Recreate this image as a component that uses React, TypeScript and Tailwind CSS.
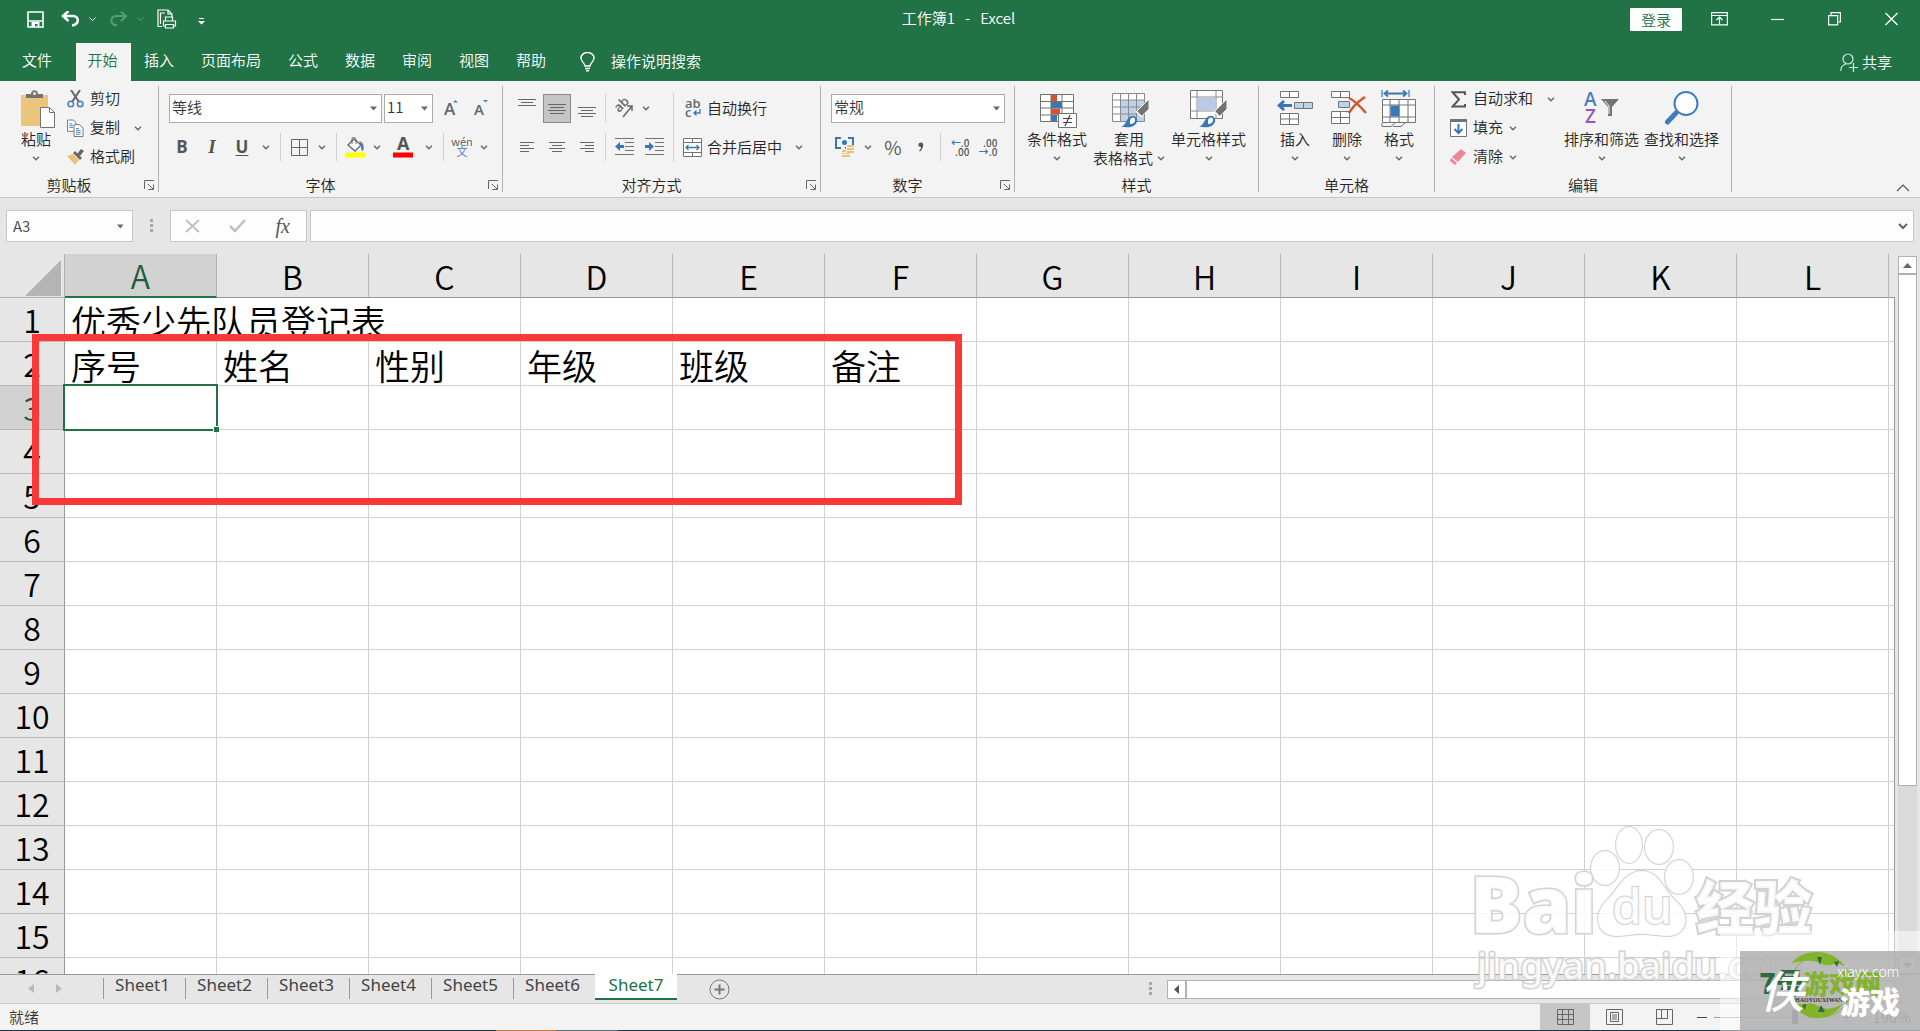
import React from "react";

type Children = { children?: React.ReactNode };

const COLUMNS = ["A", "B", "C", "D", "E", "F", "G", "H", "I", "J", "K", "L"];
const ROWS = Array.from({ length: 16 }, (_, i) => i + 1);
const HEADINGS = ["序号", "姓名", "性别", "年级", "班级", "备注"];
const MENUS = ["插入", "页面布局", "公式", "数据", "审阅", "视图", "帮助"];
const SHEETS = ["Sheet1", "Sheet2", "Sheet3", "Sheet4", "Sheet5", "Sheet6"];

/* ---------- small parts ---------- */

const Caret = () => (
  <svg width="8" height="5" viewBox="0 0 8 5" fill="none" stroke="#666" strokeWidth="1.4">
    <path d="M1 .8l3 3 3-3" />
  </svg>
);

const CaretButton = ({ label }: { label: string }) => (
  <button aria-label={label} className="flex h-7 w-[18px] items-center justify-center">
    <Caret />
  </button>
);

const Sep = () => <span className="mx-[5px] h-7 w-px bg-[#d0d0d0]" />;

const Launcher = ({ label }: { label: string }) => (
  <button aria-label={label} className="w-5 pl-[6px]">
    <svg width="11" height="11" viewBox="0 0 11 11" fill="none" stroke="#666">
      <path d="M.5 9V.5H10M4 4l5 5M9.500 4.500v5h-5" />
    </svg>
  </button>
);

const Group = ({ label, launcher, className, children }: Children & { label: string; launcher?: boolean; className: string }) => (
  <section className={`flex h-[106px] shrink-0 flex-col border-r border-[#b1b1b1] ${className}`}>
    <div className="flex h-[92px]">{children}</div>
    <div className="flex h-[14px] items-center text-center leading-[14px]">
      <span className="flex-1">{label}</span>
      {launcher && <Launcher label={`${label}设置`} />}
    </div>
  </section>
);

const BigButton = ({ icon, label, second, className }: { icon: React.ReactNode; label: string; second?: string; className: string }) => (
  <button className={`flex shrink-0 flex-col items-center pt-1 leading-[18px] whitespace-nowrap ${className}`}>
    <span className="flex h-10 items-start">{icon}</span>
    <span>{label}</span>
    <span className="flex h-5 items-center gap-1">
      {second}
      <Caret />
    </span>
  </button>
);

const SmallButton = ({ icon, label, caret }: { icon: React.ReactNode; label: string; caret?: string }) => (
  <button className="flex h-6 items-center whitespace-nowrap">
    <span className="mr-[6px] flex w-[17px] justify-center">{icon}</span>
    <span className="pb-[2px]">{label}</span>
    {caret && (
      <span className={caret}>
        <Caret />
      </span>
    )}
  </button>
);

const Combo = ({ label, value, className }: { label: string; value: string; className: string }) => (
  <label className={`relative block h-[29px] ${className}`}>
    <select aria-label={label} className="h-full w-full appearance-none border border-[#ababab] bg-white pb-[2px] pl-[2px] text-[15px] text-[#333]">
      <option>{value}</option>
    </select>
    <svg className="pointer-events-none absolute top-3 right-[5px]" width="7" height="5" viewBox="0 0 7 5">
      <path d="M0 .5h7L3.500 4.500z" fill="#666" />
    </svg>
  </label>
);

const Tool = ({ label, className = "w-7", children }: Children & { label: string; className?: string }) => (
  <button aria-label={label} className={`flex h-7 shrink-0 items-center justify-center ${className}`}>
    {children}
  </button>
);

const Lines = ({ d }: { d: string }) => (
  <svg width="18" height="18" viewBox="0 0 18 18" fill="none" stroke="#666">
    <path d={d} />
  </svg>
);

/* ---------- icons ---------- */

const PasteIcon = () => (
  <svg width="40" height="39" viewBox="-4 0 40 39">
    <path d="M1 5h27v31H1z" fill="#ecc57d" />
    <path d="M6 8V4h5c0-5 7-5 7 0h5v4z" fill="#737373" />
    <circle cx="14.500" cy="3.500" r="1.500" fill="#f3f3f3" />
    <path d="M20.500 17.500h9l5 5v15h-14z" fill="#fff" stroke="#737373" />
    <path d="M29.500 17.500v5h5" fill="none" stroke="#737373" />
  </svg>
);

const CutIcon = () => (
  <svg width="17" height="18" viewBox="0 0 17 18" fill="none">
    <path d="M4 0l8 12M13 0L5 12" stroke="#666" strokeWidth="2" />
    <circle cx="3.800" cy="14" r="2.800" stroke="#4a7ebb" strokeWidth="1.500" />
    <circle cx="13.200" cy="14" r="2.800" stroke="#4a7ebb" strokeWidth="1.500" />
  </svg>
);

const CopyIcon = () => (
  <svg width="18" height="19" viewBox="0 0 18 19" fill="#fff" stroke="#737373">
    <path d="M.5.5h6l3 3v9h-9z" />
    <path d="M7.500 5.500h6l3.500 3.500v9H7.500z" />
    <path d="M2.500 4.500h3M2.500 6.500h4M2.500 8.500h4M9.500 9.500h3M9.500 11.500h5M9.500 13.500h5M9.500 15.500h5" stroke="#4a7ebb" />
  </svg>
);

const PainterIcon = () => (
  <svg width="17" height="16" viewBox="0 0 17 16">
    <path d="M0 7l6-2 6 6-4 5z" fill="#ecc07a" />
    <path d="M6 4l2-2 7 7-2 2z" fill="#666" />
    <path d="M10 5l4-5 3 2-4 5z" fill="#666" />
  </svg>
);

const FontSizeIcon = ({ grow }: { grow?: boolean }) => (
  <svg className="overflow-visible" width="14" height="18" viewBox="0 0 14 18">
    <text x="0" y="16" fontSize={grow ? 17 : 15} fontWeight="600" fill="#666" fontFamily="Open Sans, sans-serif">A</text>
    <path d={grow ? "M9 3.500L11.500 1 14 3.500z" : "M9 1h5l-2.500 2.500z"} fill="#4a7ebb" />
  </svg>
);

const BucketIcon = () => (
  <svg width="20" height="21" viewBox="0 0 20 21">
    <path d="M3 8l6-6 7 6-6 6z" fill="#fff" stroke="#666" strokeWidth="1.300" />
    <path d="M7 7V2c0-3 4-2 4 1v4" fill="none" stroke="#666" />
    <path d="M14 4c4 1 6 5 4 10-2 0-2-3-2-6z" fill="#4a7ebb" />
    <path d="M0 15.500h20v5H0z" fill="#ff0" />
  </svg>
);

const BrushOverlay = () => (
  <>
    <path d="M37 9v10l-8 8-5-5z" fill="#737373" stroke="#f3f3f3" />
    <path d="M24 21l6 6" stroke="#f3f3f3" strokeWidth="1.500" />
    <path d="M9 36.500c5-1 5-7 9-10 4-2 8 1 7 5-1 5-8 7-16 5z" fill="#3a78b5" />
    <path d="M18 31c0-4 5-5 5-1 0 3-3 4-5 4z" fill="#fff" />
  </>
);

const CondFormatIcon = () => (
  <svg width="42" height="38" viewBox="-4 0 42 38">
    <path d="M.5 4.500h33v27H.5z" fill="#fff" stroke="#737373" />
    <path d="M.5 11.500h33M.5 18h33M.5 25h33M11 4.500v27M22 4.500v27" stroke="#737373" fill="none" />
    <path d="M11 5h6v6h-6zM11 18.500h9v6h-9z" fill="#d35230" />
    <path d="M11 12h11v6H11zM11 25h6v6h-6z" fill="#3a78b5" />
    <path d="M18.500 23.500h18v14h-18z" fill="#fff" stroke="#737373" />
    <path d="M23 28.500h9M23 32.500h9M30 25l-5 11" stroke="#444" fill="none" strokeWidth="1.200" />
  </svg>
);

const TableFormatIcon = () => (
  <svg width="39" height="38" viewBox="-2 0 39 38">
    <path d="M.5 3.500h32v28H.5z" fill="#fff" />
    <path d="M8.500 10h24v21.500h-24z" fill="#bcd3e8" />
    <path d="M.5 3.500h32v28H.5zM.5 10h32M.5 17h32M.5 24h32M8.500 3.500v28M16.500 3.500v28M24.500 3.500v28" stroke="#8a8a8a" fill="none" />
    <BrushOverlay />
  </svg>
);

const CellStyleIcon = () => (
  <svg width="37" height="38" viewBox="0 0 37 38">
    <path d="M.5.5h32v28H.5z" fill="#fff" stroke="#737373" />
    <path d="M.5 7h32M.5 21h32M7 .5v28M26 .5v28" stroke="#8a8a8a" fill="none" />
    <path d="M7.500 7.500h18v13h-18z" fill="#b9c9e6" />
    <BrushOverlay />
  </svg>
);

const InsertIcon = () => (
  <svg width="36" height="36" viewBox="0 0 36 36">
    <path d="M3.500 1.500h18v6h-18zM3.500 23.500h18v11h-18zM3.500 29h18M12.500 1.500v6M12.500 23.500v11" fill="#fff" stroke="#737373" />
    <path d="M17.500 12.500h18v6h-18zM26.500 12.500v6" fill="#bcd3e8" stroke="#737373" />
    <path d="M0 15.500l6-5.500 2 2-2 2h9v3H6l2 2-2 2z" fill="#3a78b5" />
  </svg>
);

const DeleteIcon = () => (
  <svg width="39" height="36" viewBox="-3 0 39 36">
    <path d="M.5 1.500h18v6H.5zM.5 21.500h18v12H.5zM.5 27.500h18M9.500 1.500v6M9.500 21.500v12" fill="#fff" stroke="#737373" />
    <path d="M7.500 11.500h11v6h-11z" fill="#bcd3e8" stroke="#737373" />
    <path d="M18 8c6 3 11 8 17 15M34 7c-6 4-12 9-16 16" stroke="#d35230" strokeWidth="2.500" fill="none" />
  </svg>
);

const FormatIcon = () => (
  <svg width="36" height="38" viewBox="0 0 36 38">
    <path d="M1 0v7M28 0v7" stroke="#3a78b5" strokeWidth="1.200" />
    <path d="M7 .5L3.500 3.500 7 6.500M22 .5l3.500 3L22 6.500M4 3.500h21" stroke="#3a78b5" strokeWidth="1.800" fill="none" />
    <path d="M1.500 9.500h33v23h-33zM1.500 15h33M1.500 27h33M9 9.500v23M18 9.500v23M27 9.500v23" fill="#fff" stroke="#737373" />
    <path d="M9.500 15.500h9v11h-9z" fill="#3a78b5" />
    <path d="M1 33v3.500h9l4-3.500M12 36.500h8l4-3.500" fill="none" stroke="#737373" />
  </svg>
);

const SortIcon = () => (
  <svg width="36" height="38" viewBox="0 0 36 38" fontFamily="Open Sans, sans-serif" fontSize="19" fontWeight="600">
    <text x="0" y="16" fill="#4a7ebb">A</text>
    <text x="1" y="33" fill="#8e5bb5">Z</text>
    <path d="M17 9h18l-7 8v9h-4v-9z" fill="#737373" />
    <path d="M21 11l4 5v8" fill="none" stroke="#fff" />
  </svg>
);

const FindIcon = () => (
  <svg width="36" height="38" viewBox="0 0 36 38" fill="none">
    <path d="M12 23L3.500 32" stroke="#3f7bbf" strokeWidth="5" strokeLinecap="round" />
    <circle cx="22" cy="13.500" r="11.500" fill="#fff" stroke="#3f7bbf" strokeWidth="2" />
  </svg>
);

/* ---------- window chrome ---------- */

const TitleBar = () => (
  <header className="flex h-[43px] items-start pt-1 text-white">
    <div className="flex h-[30px] flex-1 items-center pl-[27px]">
      <button aria-label="保存">
        <svg width="17" height="17" viewBox="0 0 17 17">
          <path d="M1 1h15v15H1zM1 10h15" fill="none" stroke="#fff" strokeWidth="1.600" />
          <path d="M4.500 11h8v5h-2v-3H8v3H4.500z" fill="#fff" />
        </svg>
      </button>
      <button aria-label="撤消" className="ml-[17px] flex items-center gap-[9px]">
        <svg width="19" height="16" viewBox="0 0 19 16" fill="none" stroke="#fff" strokeWidth="2.500">
          <path d="M7.500 0L2 5l5.500 5M3 5h9c6 0 7 8-1 9.500" />
        </svg>
        <svg width="7" height="4" viewBox="0 0 7 4" fill="none" stroke="#fff"><path d="M.5.5l3 3 3-3" /></svg>
      </button>
      <button aria-label="恢复" className="ml-[13px] flex items-center gap-[9px] opacity-30">
        <svg width="19" height="16" viewBox="0 0 19 16" fill="none" stroke="#cfe" strokeWidth="2">
          <path d="M12 1l5 4-5 5M17 5H8C1 5 0 13 8 14.500" />
        </svg>
        <svg width="7" height="4" viewBox="0 0 7 4" fill="none" stroke="#fff"><path d="M.5.5l3 3 3-3" /></svg>
      </button>
      <button aria-label="打印预览" className="ml-[13px]">
        <svg width="20" height="20" viewBox="0 0 20 20" fill="none" stroke="#fff" strokeWidth="1.200">
          <path d="M5 17.500H1V1h10l4 4v3M11 1v4h4M3.500 15V4H8" />
          <path d="M8.500 12V8h7v4M6.500 12h12v5h-12z" />
          <path d="M8.500 15.500h8V19h-8z" fill="#217346" />
        </svg>
      </button>
      <button aria-label="自定义快速访问工具栏" className="ml-[21px] pt-1">
        <svg width="7" height="7" viewBox="0 0 7 7" fill="#fff"><path d="M1 0h5v1H1zM0 3h7L3.500 6.500z" /></svg>
      </button>
    </div>
    <h1 className="pr-2 leading-[28px] whitespace-pre">工作簿1{"   -   "}Excel</h1>
    <div className="flex h-[30px] flex-1 items-center justify-end pr-[22px]">
      <button className="h-[23px] w-[52px] rounded-[1px] bg-white leading-[21px] text-[#217346]">登录</button>
      <button aria-label="功能区显示选项" className="ml-[29px]">
        <svg width="17" height="14" viewBox="0 0 17 14" fill="none" stroke="#fff" strokeWidth="1.200">
          <path d="M.6.600h15.800v12.300H.6zM.6 3.500h15.800M8.500 12V5.500M5.500 8l3-3 3 3" />
        </svg>
      </button>
      <button aria-label="最小化" className="ml-[43px]">
        <svg width="13" height="14" viewBox="0 0 13 14"><path d="M0 7.500h13" stroke="#fff" strokeWidth="1.200" /></svg>
      </button>
      <button aria-label="向下还原" className="ml-11">
        <svg width="13" height="14" viewBox="0 0 13 14" fill="none" stroke="#fff" strokeWidth="1.200">
          <path d="M.6 3.600h9v9.300h-9zM3 3V.6h9.400v9.400H10" />
        </svg>
      </button>
      <button aria-label="关闭" className="ml-11">
        <svg width="13" height="14" viewBox="0 0 13 14"><path d="M.5 1l12 12M12.500 1l-12 12" stroke="#fff" strokeWidth="1.300" /></svg>
      </button>
    </div>
  </header>
);

const MenuBar = () => (
  <nav className="flex h-[38px] text-white">
    <button className="w-[76px] pr-[2px] pb-1">文件</button>
    <button className="w-[55px] bg-[#f3f3f3] pr-[2px] pb-1 text-[#217346]">开始</button>
    {MENUS.map((m) => (
      <button key={m} className="pr-[14px] pb-1 pl-[13px]">{m}</button>
    ))}
    <button className="flex items-center gap-4 pl-5">
      <svg width="15" height="20" viewBox="0 0 15 20" fill="none" stroke="#fff" strokeWidth="1.400">
        <path d="M5 14c0-3-4-4-4-8a6.500 5.500 0 0 1 13 0c0 4-4 5-4 8zM5 16.500h5M6 18.800h3" />
      </svg>
      <span className="pb-[2px]">操作说明搜索</span>
    </button>
    <button className="ml-auto flex items-center gap-1 pr-7">
      <svg width="18" height="19" viewBox="0 0 18 19" fill="none" stroke="#d6e8dd" strokeWidth="1.200">
        <circle cx="8" cy="6" r="5" />
        <path d="M.7 18c0-4 2-6 5-7M9 14.500h9M13.500 10v9" />
      </svg>
      共享
    </button>
  </nav>
);

const Ribbon = () => (
  <div className="flex bg-[#f3f3f3] pt-[5px] pb-[5px] text-[#262626]">
    <Group label="剪贴板" launcher className="w-[159px]">
      <BigButton icon={<PasteIcon />} label="粘贴" className="ml-[15px] w-[42px]" />
      <div className="ml-[10px] flex flex-col gap-[5px] pt-px">
        <SmallButton icon={<CutIcon />} label="剪切" />
        <SmallButton icon={<CopyIcon />} label="复制" caret="ml-[14px]" />
        <SmallButton icon={<PainterIcon />} label="格式刷" />
      </div>
    </Group>

    <Group label="字体" launcher className="w-[344px]">
      <div className="flex flex-col gap-[10px] pt-2">
        <div className="flex pl-[10px]">
          <Combo label="字体名称" value="等线" className="w-[213px]" />
          <Combo label="字号" value="11" className="ml-[2px] w-[49px]" />
          <Tool label="增大字号" className="ml-[3px] w-[30px]"><FontSizeIcon grow /></Tool>
          <Tool label="减小字号" className="w-[30px]"><FontSizeIcon /></Tool>
        </div>
        <div className="flex pl-2 font-['Open_Sans',sans-serif] text-[17px] text-[#555]">
          <Tool label="加粗" className="w-[30px]"><span className="font-bold">B</span></Tool>
          <Tool label="倾斜" className="w-[30px]"><i className="font-['Liberation_Serif',serif] text-[19px] font-bold">I</i></Tool>
          <Tool label="下划线" className="w-[30px]"><span className="font-bold underline decoration-1 underline-offset-2">U</span></Tool>
          <CaretButton label="下划线样式" />
          <Sep />
          <Tool label="边框" className="w-[27px]">
            <svg width="17" height="17" viewBox="0 0 17 17" fill="none" stroke="#666"><path d="M.5.5h16v16H.5zM8.500.5v16M.5 8.500h16" /></svg>
          </Tool>
          <CaretButton label="边框样式" />
          <Sep />
          <Tool label="填充颜色" className="w-[26px]"><BucketIcon /></Tool>
          <CaretButton label="填充颜色选项" />
          <Tool label="字体颜色" className="w-[34px]">
            <svg className="overflow-visible" width="20" height="21" viewBox="0 0 20 21">
              <text x="4" y="13" fontSize="18" fontWeight="700" fill="#555">A</text>
              <path d="M0 15.500h20v5H0z" fill="#f00" />
            </svg>
          </Tool>
          <CaretButton label="字体颜色选项" />
          <Sep />
          <Tool label="拼音" className="w-[26px]">
            <span className="flex flex-col items-center pb-[2px] font-['Noto_Sans_CJK_SC',sans-serif] text-[11px] leading-[9px]">
              wén
              <span className="leading-[10px] text-[#3a78b5]">文</span>
            </span>
          </Tool>
          <CaretButton label="拼音选项" />
        </div>
      </div>
    </Group>

    <Group label="对齐方式" launcher className="w-[318px]">
      <div className="flex flex-col gap-[10px] pt-2 pl-[10px]">
        <div className="flex h-[29px] gap-[2px]">
          <Tool label="顶端对齐"><Lines d="M0 .5h18M3 3.500h12M0 6.500h18" /></Tool>
          <button aria-label="垂直居中" className="flex h-[29px] w-7 items-center justify-center border border-[#8a8a8a] bg-[#c6c6c6]"><Lines d="M0 4.500h18M2 7.500h14M0 10.500h18M2 13.500h14" /></button>
          <Tool label="底端对齐"><Lines d="M0 8.500h18M3 11.500h12M0 14.500h18M3 17.500h12" /></Tool>
        </div>
        <div className="flex gap-[2px]">
          <Tool label="左对齐"><Lines d="M2 4.500h14M2 7.500h9M2 10.500h14M2 13.500h9" /></Tool>
          <Tool label="居中"><Lines d="M1 4.500h16M4 7.500h10M1 10.500h16M4 13.500h10" /></Tool>
          <Tool label="右对齐"><Lines d="M2 4.500h14M7 7.500h9M2 10.500h14M7 13.500h9" /></Tool>
        </div>
      </div>
      <div className="flex flex-col gap-[10px] pt-2">
        <div className="flex h-[29px]">
          <span className="mr-[5px] ml-1 h-7 w-px bg-[#d0d0d0]" />
          <Tool label="方向" className="w-[26px]">
            <svg width="20" height="20" viewBox="0 0 20 20">
              <text x="0" y="0" fontSize="13" fontWeight="600" fill="#666" fontFamily="Open Sans, sans-serif" transform="translate(5 15) rotate(-45)">ab</text>
              <path d="M9 19L18 8M18 13V8h-5" fill="none" stroke="#666" strokeWidth="1.500" />
            </svg>
          </Tool>
          <CaretButton label="方向选项" />
        </div>
        <div className="flex">
          <span className="mr-[3px] ml-1 h-7 w-px bg-[#d0d0d0]" />
          <Tool label="减少缩进量" className="w-[30px]">
            <svg width="19" height="18" viewBox="0 0 19 18">
              <path d="M0 .5h19M10 4.500h9M10 8.500h9M10 12.500h9M0 16.500h19" stroke="#737373" fill="none" />
              <path d="M0 8.500L5 4v3h4v3H5v3z" fill="#3a78b5" />
            </svg>
          </Tool>
          <Tool label="增加缩进量" className="w-[30px]">
            <svg width="19" height="18" viewBox="0 0 19 18">
              <path d="M0 .5h19M10 4.500h9M10 8.500h9M10 12.500h9M0 16.500h19" stroke="#737373" fill="none" />
              <path d="M9 8.500L4 4v3H0v3h4v3z" fill="#3a78b5" />
            </svg>
          </Tool>
        </div>
      </div>
      <span className="mt-[7px] ml-1 h-[69px] w-px bg-[#d0d0d0]" />
      <div className="ml-[9px] flex flex-col gap-[10px] pt-2">
        <button className="flex h-[29px] items-center gap-1">
          <svg width="20" height="20" viewBox="0 0 20 20" fontFamily="Open Sans, sans-serif" fontSize="13" fontWeight="600" fill="#666">
            <text x="2" y="9">ab</text>
            <text x="2" y="18">c</text>
            <path d="M17 10v4h-6M13.500 11.500L11 14l2.500 2.500" fill="none" stroke="#3a78b5" strokeWidth="1.300" />
          </svg>
          自动换行
        </button>
        <button className="flex h-7 items-center gap-1">
          <svg width="20" height="19" viewBox="0 0 20 19" fill="#fff" stroke="#737373">
            <path d="M.5.5h18v18H.5zM9.500.5v4M9.500 14.500v4M.5 4.500h18M.5 14.500h18" />
            <path d="M3 9.500h13M5.500 7L3 9.500 5.500 12M13.500 7L16 9.500 13.500 12" fill="none" stroke="#3a78b5" strokeWidth="1.300" />
          </svg>
          合并后居中
          <span className="ml-[9px]"><Caret /></span>
        </button>
      </div>
    </Group>

    <Group label="数字" launcher className="w-[194px]">
      <div className="flex flex-col gap-[10px] pt-2">
        <Combo label="数字格式" value="常规" className="ml-[10px] w-[174px]" />
        <div className="flex pl-[10px]">
          <Tool label="会计数字格式">
            <svg width="20" height="20" viewBox="0 0 20 20">
              <path d="M1 1h17v10H1z" fill="#f3f3f3" stroke="#3a78b5" strokeWidth="2" />
              <path d="M6 0h7v2H6zM6 10h4v2H6z" fill="#f3f3f3" />
              <circle cx="9.500" cy="5.500" r="2.500" fill="#3a78b5" />
              <path d="M11 8h8v12h-5v-2h-3z" fill="#f3f3f3" />
              <path d="M12 8h7v2h-7zM12 11h7v2h-7zM12 14h7v2h-7zM7 13h4v2H7zM7 16h8v1H7zM7 18h8v2H7z" fill="#ecc07a" />
            </svg>
          </Tool>
          <CaretButton label="会计数字格式选项" />
          <Tool label="百分比样式" className="w-8"><span className="text-[19px] text-[#555]">%</span></Tool>
          <Tool label="千位分隔样式" className="w-[26px]"><svg width="8" height="10" viewBox="0 0 8 10"><path d="M2 9.500c3-2 5-9 1-9-3 0-4 4 0 4.500 0 2-1 3-2 3.500z" fill="#555" /></svg></Tool>
          <Sep />
          <Tool label="增加小数位数">
            <span className="text-right text-[10px] leading-[9px] font-medium text-[#555]"><span className="font-bold text-[#3a78b5]">←</span>.0<br />.00</span>
          </Tool>
          <Tool label="减少小数位数">
            <span className="text-right text-[10px] leading-[9px] font-medium text-[#555]">.00<br /><span className="font-bold text-[#3a78b5]">→</span>.0</span>
          </Tool>
        </div>
      </div>
    </Group>

    <Group label="样式" className="w-[244px]">
      <div className="flex gap-[5px] pl-3">
        <BigButton icon={<CondFormatIcon />} label="条件格式" className="w-[60px]" />
        <BigButton icon={<TableFormatIcon />} label="套用" second="表格格式" className="w-[74px]" />
        <BigButton icon={<CellStyleIcon />} label="单元格样式" className="w-[75px]" />
      </div>
    </Group>

    <Group label="单元格" className="w-[176px]">
      <div className="flex pl-[10px]">
        <BigButton icon={<InsertIcon />} label="插入" className="w-[52px]" />
        <BigButton icon={<DeleteIcon />} label="删除" className="w-[52px]" />
        <BigButton icon={<FormatIcon />} label="格式" className="w-[52px]" />
      </div>
    </Group>

    <Group label="编辑" className="w-[297px]">
      <div className="flex w-[129px] flex-col gap-[5px] pt-px pl-[15px]">
        <SmallButton
          icon={<svg width="15" height="17" viewBox="0 0 15 17"><path d="M14 4V1.200H1.500L8 8.500l-6.500 7H14V13" fill="none" stroke="#555" strokeWidth="2" /></svg>}
          label="自动求和"
          caret="ml-[14px]"
        />
        <SmallButton
          icon={
            <svg width="17" height="18" viewBox="0 0 17 18">
              <path d="M.5.5h16v17H.5z" fill="#fff" stroke="#737373" />
              <path d="M0 0h17v3H0z" fill="#737373" />
              <path d="M8.500 5v9M4.500 10l4 4 4-4" fill="none" stroke="#3a78b5" strokeWidth="2" />
            </svg>
          }
          label="填充"
          caret="ml-[6px]"
        />
        <SmallButton
          icon={
            <svg width="17" height="16" viewBox="0 0 17 16">
              <path d="M11 0l5 4-8 9-6-5z" fill="#e8899a" />
              <path d="M1 9l6 5-2 2-5-4z" fill="#e8899a" />
            </svg>
          }
          label="清除"
          caret="ml-[6px]"
        />
      </div>
      <div className="flex gap-[5px]">
        <BigButton icon={<SortIcon />} label="排序和筛选" className="w-[75px]" />
        <BigButton icon={<FindIcon />} label="查找和选择" className="w-[75px]" />
      </div>
    </Group>

    <button aria-label="折叠功能区" className="mt-auto mr-[10px] ml-auto">
      <svg width="14" height="8" viewBox="0 0 14 8" fill="none" stroke="#555" strokeWidth="1.200"><path d="M1 7l6-6 6 6" /></svg>
    </button>
  </div>
);

const Dots = () => (
  <svg width="4" height="14" viewBox="0 0 4 14" fill="#a6a6a6"><path d="M0 0h3v3H0zM0 5h3v3H0zM0 10h3v3H0z" /></svg>
);

const FormulaBar = () => (
  <div className="flex h-[57px] items-start border-t border-[#c6c6c6] px-[6px] pt-3">
    <div className="flex h-8 w-[127px] items-center border border-[#c6c6c6] bg-[#fdfdfd] pr-2">
      <input aria-label="名称框" defaultValue="A3" className="w-full min-w-0 bg-transparent pl-[6px] text-[#444]" />
      <svg width="7" height="5" viewBox="0 0 7 5"><path d="M0 .5h7L3.500 4.500z" fill="#666" /></svg>
    </div>
    <span className="flex h-8 w-[37px] items-center justify-center"><Dots /></span>
    <div className="flex h-8 w-[137px] items-center justify-between border border-[#c6c6c6] bg-[#fdfdfd] px-[14px]">
      <button aria-label="取消"><svg width="15" height="14" viewBox="0 0 15 14"><path d="M1 1l13 12M14 1L1 13" stroke="#c0c0c0" strokeWidth="2" /></svg></button>
      <button aria-label="输入"><svg width="17" height="14" viewBox="0 0 17 14" fill="none"><path d="M1 7l5 5L16 1" stroke="#c0c0c0" strokeWidth="2.500" /></svg></button>
      <button aria-label="插入函数" className="pr-[2px] font-['Liberation_Serif',serif] text-[20px] leading-6 text-[#555] italic">fx</button>
    </div>
    <div className="ml-[3px] flex h-8 flex-1 items-center border border-[#c6c6c6] bg-[#fdfdfd] pr-[5px]">
      <input aria-label="编辑栏" className="h-full flex-1 bg-transparent px-2" />
      <svg width="10" height="7" viewBox="0 0 10 7" fill="none"><path d="M1 1l4 4 4-4" stroke="#666" strokeWidth="2" /></svg>
    </div>
  </div>
);

/* ---------- sheet ---------- */

const Cell = ({ row, col }: { row: number; col: number }) => {
  const selected = row === 3 && col === 0;
  return (
    <td className="relative h-11 border-r border-b border-[#d0d0d0] bg-white pt-[2px] pl-[6px] text-[35px] leading-[38px]">
      {row === 2 && HEADINGS[col]}
      {selected && (
        <>
          <span className="absolute -inset-[2px] z-10 border-2 border-[#217346]" />
          <span className="absolute -right-[3px] -bottom-[3px] z-10 h-[6px] w-[6px] border-t border-l border-white bg-[#217346]" />
        </>
      )}
    </td>
  );
};

const Grid = () => (
  <div className="relative min-w-0 flex-1 overflow-hidden">
    <table className="w-full table-fixed border-separate border-spacing-0 font-[350] text-black">
      <colgroup>
        <col className="w-[65px]" />
        {COLUMNS.map((c) => (
          <col key={c} className="w-[152px]" />
        ))}
        <col />
      </colgroup>
      <thead>
        <tr>
          <th className="h-11 border-r border-b border-[#b1b1b1] p-0">
            <svg className="mt-1 ml-[25px]" width="36" height="36" viewBox="0 0 36 36"><path d="M36 0v36H0z" fill="#b4b4b4" /></svg>
          </th>
          {COLUMNS.map((c, i) => (
            <th
              key={c}
              scope="col"
              className={`h-11 border-r p-0 text-[32px] leading-[38px] font-[350] ${
                i === 0 ? "border-b-2 border-r-[#b1b1b1] border-b-[#217346] bg-[#d2d2d2] text-[#1e5c3b]" : "border-b border-r-[#b8b8b8] border-b-[#999]"
              }`}
            >
              {c}
            </th>
          ))}
          <th className="border-b border-[#999] p-0" />
        </tr>
      </thead>
      <tbody>
        {ROWS.map((r) => (
          <tr key={r}>
            <th
              scope="row"
              className={`h-11 border-r border-b border-r-[#999] border-b-[#b8b8b8] p-0 pb-[2px] text-[32px] leading-[38px] font-[350] ${
                r === 3 ? "bg-[#d2d2d2] text-[#1e5c3b]" : ""
              }`}
            >
              {r}
            </th>
            {r === 1 ? (
              <td colSpan={3} className="h-11 border-r border-b border-[#d0d0d0] bg-white pt-[2px] pl-[6px] text-[35px] leading-[38px]">优秀少先队员登记表</td>
            ) : (
              COLUMNS.slice(0, 3).map((c, i) => <Cell key={c} row={r} col={i} />)
            )}
            {COLUMNS.slice(3).map((c, i) => (
              <Cell key={c} row={r} col={i + 3} />
            ))}
            <td className="border-r border-b border-r-[#999] border-b-[#d0d0d0] bg-white p-0" />
          </tr>
        ))}
      </tbody>
    </table>
    {/* highlight frame drawn over the table */}
    <div className="absolute top-20 left-8 z-20 h-[171px] w-[930px] border-[7px] border-[#fa3838]" />
  </div>
);

const VerticalScroll = () => (
  <div className="flex w-[25px] flex-col px-[3px] pt-[2px]">
    <button aria-label="向上滚动" className="flex h-[18px] w-[19px] items-center justify-center border border-[#b1b1b1] bg-white">
      <svg width="9" height="5" viewBox="0 0 9 5"><path d="M0 5h9L4.500 0z" fill="#666" /></svg>
    </button>
    <div className="flex w-[19px] flex-1 flex-col bg-[#dadada]">
      <div className="h-3/4 w-[19px] border border-[#b1b1b1] bg-white" />
    </div>
    <button aria-label="向下滚动" className="flex h-[18px] w-[19px] items-center justify-center border border-[#b1b1b1] bg-white">
      <svg width="9" height="5" viewBox="0 0 9 5"><path d="M0 0h9L4.500 5z" fill="#666" /></svg>
    </button>
  </div>
);

const SheetTabs = () => (
  <div className="flex h-[29px] border-t border-[#999] font-['Noto_Sans',sans-serif] text-[17px] font-normal text-[#444]">
    <div className="flex h-[26px] w-[103px] items-center gap-[22px] pl-7">
      <button aria-label="上一个工作表"><svg width="6" height="9" viewBox="0 0 6 9"><path d="M6 0v9L0 4.500z" fill="#b8b8b8" /></svg></button>
      <button aria-label="下一个工作表"><svg width="6" height="9" viewBox="0 0 6 9"><path d="M0 0v9l6-4.500z" fill="#b8b8b8" /></svg></button>
    </div>
    {SHEETS.map((s) => (
      <button key={s} className="mt-[3px] h-[21px] w-[82px] border-l border-[#999] pr-1 pb-[7px] leading-[14px]">{s}</button>
    ))}
    <button className="-mt-px h-[26px] w-[82px] border-b-2 border-[#217346] bg-white pb-[3px] leading-[20px] text-[#217346]">Sheet7</button>
    <button aria-label="新工作表" className="ml-8">
      <svg width="21" height="21" viewBox="0 0 21 21" fill="none" stroke="#777">
        <circle cx="10.500" cy="10.500" r="9.500" />
        <path d="M10.500 5.500v10M5.500 10.500h10" strokeWidth="2" />
      </svg>
    </button>
    <div className="ml-auto flex items-center">
      <Dots />
      <div className="ml-[14px] flex h-[19px] w-[728px]">
        <button aria-label="向左滚动" className="flex w-[19px] items-center justify-center border border-[#b1b1b1] bg-white">
          <svg width="5" height="9" viewBox="0 0 5 9"><path d="M5 0v9L0 4.500z" fill="#555" /></svg>
        </button>
        <div className="flex-1 border border-[#b1b1b1] bg-white" />
      </div>
      <span className="w-[25px]" />
    </div>
  </div>
);

const StatusBar = () => (
  <footer className="flex h-[27px] items-center border-t border-[#c6c6c6] bg-[#f3f3f3] pl-[9px] text-[#333]">
    <span>就绪</span>
    <div className="ml-auto flex h-full w-[380px] items-center">
      <button aria-label="普通" className="flex h-full w-[50px] items-center justify-center bg-[#c6c6c6]">
        <svg width="17" height="16" viewBox="0 0 17 16" fill="none" stroke="#666"><path d="M.5.5h16v15H.5zM5.500.5v15M11.500.5v15M.5 5.500h16M.5 10.500h16" /></svg>
      </button>
      <button aria-label="页面布局视图" className="flex h-full w-[48px] items-center justify-center">
        <svg width="17" height="16" viewBox="0 0 17 16" fill="none" stroke="#666"><path d="M.5.5h16v15H.5zM4.500 3.500h8v9h-8zM6 6h5M6 8h5M6 10h5" /></svg>
      </button>
      <button aria-label="分页预览" className="flex h-full w-[52px] items-center justify-center">
        <svg width="17" height="16" viewBox="0 0 17 16" fill="none" stroke="#666"><path d="M.5.5h16v15H.5zM5.500.5v9h6v-9M0 9.500h12" /></svg>
      </button>
      <button aria-label="缩小" className="ml-[6px] flex w-[12px] justify-center"><span className="h-px w-[10px] bg-[#444]" /></button>
      <div className="ml-[6px] flex w-[124px] items-center">
        <span className="h-px w-[78px] bg-[#a0a0a0]" />
        <span className="h-[14px] w-[6px] bg-[#555]" />
        <span className="h-px flex-1 bg-[#a0a0a0]" />
      </div>
      <button aria-label="放大" className="ml-1 text-[#555]">+</button>
      <span className="ml-auto pr-[9px] text-[#444]">190%</span>
    </div>
  </footer>
);

/* ---------- overlays ---------- */

const Watermark = () => (
  <svg className="pointer-events-none absolute right-0 bottom-0 z-30" width="460" height="210" viewBox="0 0 460 210">
    <g fill="#fff" fillOpacity=".85" stroke="#d2d2d2" strokeWidth="2" paintOrder="stroke">
      <ellipse cx="145" cy="47" rx="14" ry="17" />
      <ellipse cx="169" cy="24" rx="13" ry="18" />
      <ellipse cx="199" cy="26" rx="14" ry="17" />
      <ellipse cx="219" cy="56" rx="14" ry="17" />
      <path d="M182 50c18 0 22 20 34 30 16 14 11 35-8 35-10 0-16-2-26-2s-16 2-26 2c-19 0-24-20-10-35 12-11 18-30 36-30z" />
      <text x="10" y="112" fontSize="78" fontWeight="800" fontFamily="Open Sans, sans-serif" strokeWidth="3">Bai</text>
      <text x="152" y="103" fontSize="48" fontWeight="600" fontFamily="Open Sans, sans-serif">du</text>
      <text x="236" y="108" fontSize="58" fontWeight="900" fontFamily="Noto Sans CJK SC, sans-serif" strokeWidth="4">经验</text>
      <text x="17" y="158" fontSize="37" fontWeight="500" fontFamily="Noto Sans, sans-serif" strokeWidth="3">jingyan.baidu.com</text>
    </g>
    <path d="M260 110h200v100H260z" fill="#fff" fillOpacity=".5" />
    <path d="M280 130h180v80H280z" fill="#a8a8a8" fillOpacity=".78" />
    <g fill="#83b32b">
      <path d="M332 142c10-14 40-16 52 3-8-5-14 2-22-2-10-5-18-3-30-1z" />
      <path d="M334 182c8 4 14-2 22 2 10 5 16 5 26-1-8 16-38 22-48-1z" />
      <circle cx="361" cy="165" r="31" fill="none" stroke="#83b32b" />
      <text x="343" y="173" fontSize="26" fontWeight="900" fontFamily="Noto Sans CJK SC, sans-serif">游戏网</text>
    </g>
    <g fill="#2d6a43">
      <text x="299" y="173" fontSize="28" fontWeight="900" fontFamily="Noto Sans CJK SC, sans-serif">7号</text>
      <path d="M357 136h5l-2 8zM374 141l5-1-2 6zM342 184l4-1-1 6zM358 191l3-7 4 7z" />
    </g>
    <text x="331" y="181" fontSize="6" fontWeight="700" fill="#333" fontFamily="Liberation Serif, serif">ZHAOYOUXIWANG</text>
    <g fill="#fff" fontFamily="Noto Sans CJK SC, sans-serif">
      <text x="300" y="187" fontSize="44" fontWeight="500" fontStyle="italic">侠</text>
      <text x="380" y="192" fontSize="30" fontWeight="900">游戏</text>
      <text x="377" y="156" fontSize="14" fontFamily="Noto Sans, sans-serif">xiayx.com</text>
    </g>
  </svg>
);

const App = () => {
  return (
    <div className="relative flex h-screen flex-col overflow-hidden bg-[#e6e6e6] font-['Noto_Sans_CJK_SC',sans-serif] text-[15px] font-[350]">
      <div className="bg-[#217346]">
        <TitleBar />
        <MenuBar />
      </div>
      <Ribbon />
      <FormulaBar />
      <main className="flex min-h-0 flex-1">
        <Grid />
        <VerticalScroll />
      </main>
      <SheetTabs />
      <StatusBar />
      <div className="flex h-px shrink-0 bg-[#1c3444]">
        <span className="ml-[496px] w-[60px] bg-[#c97a3d]" />
        <span className="w-[62px] bg-[#5c6f7c]" />
      </div>
      <Watermark />
    </div>
  );
};

export default App;
